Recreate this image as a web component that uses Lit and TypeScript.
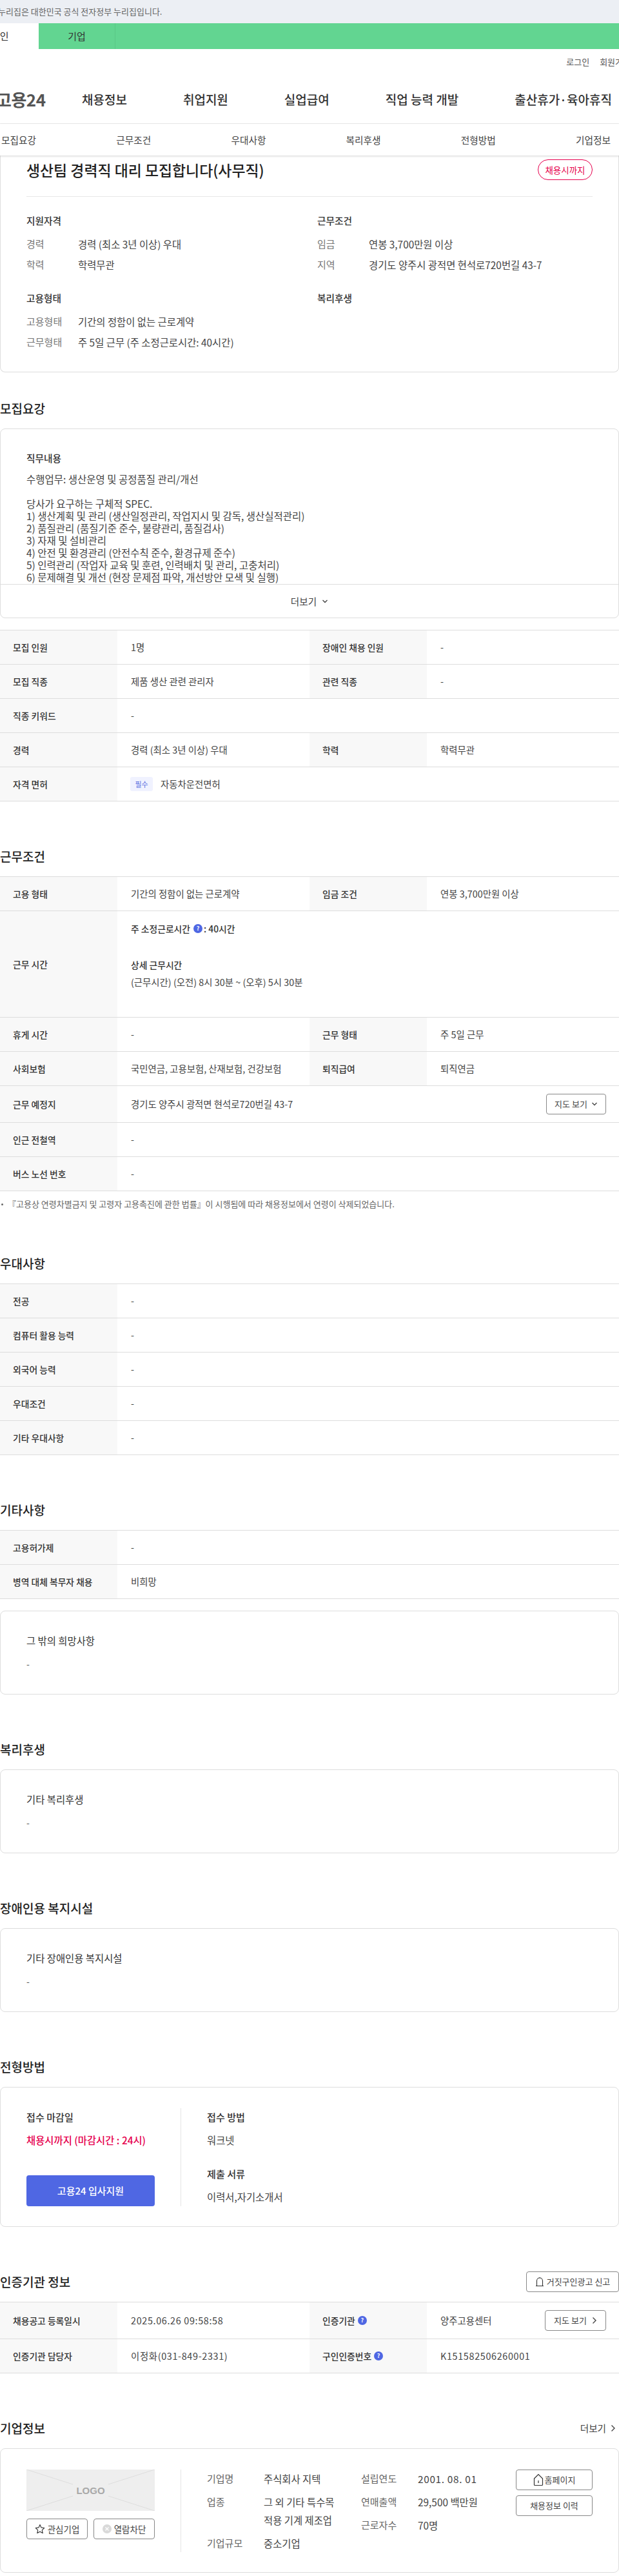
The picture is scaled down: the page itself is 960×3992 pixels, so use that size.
import { LitElement, html, css, svg } from "lit";
import { customElement } from "lit/decorators.js";

const chevDown = html`<svg class="ic" width="10" height="8" viewBox="0 0 10 8"><path d="M1.500 2l3.500 3.500L8.500 2" fill="none" stroke="currentColor" stroke-width="1.300"/></svg>`;
const chevRight = html`<svg class="ic" width="8" height="12" viewBox="0 0 8 12"><path d="M1.500 1.500L6 6l-4.500 4.500" fill="none" stroke="currentColor" stroke-width="1.400"/></svg>`;
const help = html`<span class="help">?</span>`;
const bell = html`<svg class="ic" width="14" height="16" viewBox="0 0 14 16"><path d="M1 14.500h12M2.500 14.500V6.500a4.500 4.500 0 0 1 9 0v8" fill="none" stroke="#333" stroke-width="1.100"/><path d="M7 2V1" stroke="#333"/></svg>`;
const house = html`<svg class="ic" width="16" height="20" viewBox="0 0 16 20"><path d="M1.500 8L8 1.500 14.500 8v9.500a1 1 0 0 1-1 1h-11a1 1 0 0 1-1-1z" fill="none" stroke="#333" stroke-width="1.200"/><path d="M8 11v4" stroke="#333" stroke-width="1.200"/></svg>`;
const star = html`<svg class="ic" width="16" height="16" viewBox="0 0 16 16"><path d="M8 1.500l2 4.400 4.700.6-3.400 3.300.9 4.800L8 12.200l-4.200 2.400.9-4.800L1.300 6.500 6 5.900z" fill="none" stroke="#333" stroke-width="1.100" stroke-linejoin="round"/></svg>`;
const block = html`<svg class="ic" width="14" height="14" viewBox="0 0 14 14"><circle cx="7" cy="7" r="7" fill="#d9d9d9"/><path d="M4.500 4.500l5 5M9.500 4.500l-5 5" stroke="#fff" stroke-width="1.200"/></svg>`;

type Cell = unknown;

@customElement("app-root")
export class AppRoot extends LitElement {
  static styles = css`
    :host { display: block; width: 960px; overflow: hidden; font-family: "Noto Sans CJK KR", "Noto Sans", sans-serif; color: #333; background: #fff; font-size: 14px; line-height: 24px; word-break: keep-all; }
    * { box-sizing: border-box; }
    .ic { flex: none; display: block; }
    .num { letter-spacing: .65px; }
    .gov { height: 36px; background: #eceff4; color: #666; font-size: 13px; display: flex; align-items: center; white-space: nowrap; }
    .gov span { margin-left: -3px; }
    .tabs { height: 40px; background: #62d591; display: flex; }
    .tab { display: flex; align-items: center; justify-content: center; font-size: 15px; height: 100%; }
    .tab.on { width: 60px; background: #fff; justify-content: flex-start; white-space: nowrap; }
    .tab.on span { margin-left: -14px; }
    .tab.off { width: 119px; border-right: 1px solid #5ac886; }
    .util { display: flex; justify-content: flex-end; gap: 16px; margin-right: -18px; padding-top: 8px; font-size: 13px; line-height: 24px; color: #555; height: 40px; }
    .nav { display: flex; height: 76px; align-items: center; border-bottom: 1px solid #eee; white-space: nowrap; }
    .logo { width: 133px; flex: none; margin-left: -6px; font-size: 26px; font-weight: 700; color: #555; letter-spacing: -.5px; }
    .nav a { font-size: 19px; font-weight: 500; color: #333; margin-right: 87px; }
    .snav { height: 49px; display: flex; padding-left: 2px; align-items: center; font-size: 14.700px; color: #444; box-shadow: 0 1px 3px rgba(0,0,0,.18); position: relative; }
    .snav a { width: 178.200px; flex: none; }
    .card { border: 1px solid #ddd; border-radius: 8px; }
    .summary { border-top: none; border-radius: 0 0 8px 8px; padding: 0 40px 34px; }
    .head { display: flex; justify-content: space-between; align-items: center; padding: 6px 0 25px; border-bottom: 1px solid #e8e8e8; }
    .head h1 { margin: 0; font-size: 22.900px; font-weight: 500; line-height: 31px; color: #222; }
    .pill { height: 32px; width: 85px; border: 1px solid #e6004d; border-radius: 16px; display: flex; align-items: center; justify-content: center; font-size: 13.500px; color: #e6004d; }
    .sgrid { display: grid; grid-template-columns: 451px 1fr; row-gap: 28px; padding-top: 25px; }
    .sgrid h3 { margin: 0; font-size: 14.700px; font-weight: 500; line-height: 24px; color: #333; }
    .bt { font-size: 15.100px; font-weight: 500; line-height: 24px; color: #333; }
    .kv { display: grid; grid-template-columns: 80px 1fr; row-gap: 8px; margin-top: 12px; color: #444; font-size: 15.400px; }
    .kv .k { color: #777; font-size: 15px; }
    .sec { margin-top: 71px; }
    .sec.first { margin-top: 42px; }
    .sec h2 { margin: 0 0 17px; font-size: 19px; font-weight: 500; line-height: 28px; color: #222; }
    .hrow { display: flex; justify-content: space-between; align-items: center; height: 28px; margin-bottom: 17px; }
    .hrow h2 { margin: 0; }
    .more { display: flex; align-items: center; gap: 7px; font-size: 14.600px; margin-right: 5px; color: #444; }
    .desc { height: 294px; display: flex; flex-direction: column; margin-bottom: 18px; }
    .descBody { height: 240px; overflow: hidden; padding: 33px 40px 0; }
    .descBody .bt { font-size: 14.700px; }
    .descBody p { margin: 11px 0 0; line-height: 19px; white-space: pre-line; color: #444; font-size: 15.500px; }
    .moreBar { flex: 1; border-top: 1px solid #ddd; display: flex; align-items: center; justify-content: center; gap: 8px; color: #444; font-size: 14.600px; }
    .tbl { border-top: 1px solid #ddd; }
    .row { display: grid; grid-template-columns: 182px 298px 182px 1fr; border-bottom: 1px solid #ddd; min-height: 53px; color: #444; font-size: 14.400px; }
    .k2 { background: #f8f8f8; padding-left: 20px; display: flex; align-items: center; gap: 4px; font-weight: 500; color: #333; font-size: 13.800px; }
    .v2 { padding-left: 21px; display: flex; align-items: center; }
    .v2.wide { grid-column: 2 / -1; }
    .v2.btn { justify-content: space-between; padding-right: 20px; padding-top: 12px; padding-bottom: 12px; }
    .badge { width: 35px; height: 22px; background: #f0f2ff; color: #5b6fe0; font-size: 11px; border-radius: 3px; display: flex; align-items: center; justify-content: center; margin: 0 12px 0 -1px; }
    .help { width: 14px; height: 14px; border-radius: 50%; background: #4f67e3; color: #fff; font-size: 9px; line-height: 14px; text-align: center; font-weight: 700; display: inline-block; flex: none; }
    .hours { display: block; padding-top: 15px; height: 164px; }
    .hours div { line-height: 24px; color: #333; }
    .hours .g { margin-top: 32px; font-weight: 500; font-size: 13.800px; }
    .hours .h { display: flex; align-items: center; gap: 2px; font-weight: 500; font-size: 13.800px; white-space: pre; }
    .hours .l { margin-top: 3px; color: #444; }
    .bbtn { height: 32px; border: 1px solid #888; border-radius: 4px; background: #fff; display: flex; align-items: center; justify-content: center; gap: 6px; color: #444; font-size: 13px; white-space: nowrap; }
    .map { width: 93px; }
    .map2 { width: 95px; gap: 8px; }
    .note { margin: 10px 0 -3px; font-size: 13px; line-height: 20px; color: #666; display: flex; white-space: nowrap; }
    .note i { width: 3px; height: 3px; border-radius: 50%; background: #666; margin: 9px 7px 0 2px; flex: none; }
    .after { margin-top: 18px; }
    .simple { padding: 33px 40px 34px; height: 130px; }
    .simple p { margin: 12px 0 0; color: #555; }
    .simple .bt { font-weight: 400; font-size: 15.400px; }
    .apply { display: flex; padding: 32px 40px 31px; }
    .aL { width: 199px; height: 152px; display: flex; flex-direction: column; padding-top: 1px; }
    .red { color: #e6004d; font-weight: 500; margin-top: 12px; font-size: 15.400px; white-space: nowrap; }
    .go { margin-top: auto; height: 48px; background: #4f67e3; color: #fff; border-radius: 4px; display: flex; align-items: center; justify-content: center; font-size: 15px; font-weight: 500; }
    .div { width: 1px; background: #e5e5e5; margin: 0 40px; flex: none; }
    .aR { padding-top: 1px; }
    .aR p { margin: 12px 0 28px; color: #444; font-size: 15.400px; }
    .aR p:last-child { margin-bottom: 0; }
    .report { width: 144px; gap: 4px; height: 32px; margin-right: 0; }
    .comp { display: flex; padding: 32px 40px 31px; }
    .cL { width: 199px; }
    .lg { display: block; width: 199px; height: 64px; }
    .cBtns { display: flex; justify-content: space-between; margin-top: 12px; }
    .cBtns .bbtn { width: 95px; gap: 4px; font-size: 13.500px; }
    .cGrid { width: 239px; display: grid; grid-template-columns: 88px 135px; row-gap: 8px; line-height: 28px; align-self: flex-start; color: #444; font-size: 15.400px; }
    .cGrid .k { color: #666; font-size: 15px; }
    .cBtnCol { width: 119px; display: flex; flex-direction: column; gap: 8px; margin-left: auto; }
    .cBtnCol .bbtn { gap: 2px; }
  `;

  private row(a: Cell, b: Cell, c?: Cell, d?: Cell) {
    return c === undefined
      ? html`<div class="row"><div class="k2">${a}</div><div class="v2 wide">${b}</div></div>`
      : html`<div class="row"><div class="k2">${a}</div><div class="v2">${b}</div><div class="k2">${c}</div><div class="v2">${d}</div></div>`;
  }

  private kv(k: string, v: unknown) {
    return html`<div class="k">${k}</div><div>${v}</div>`;
  }

  private box(title: string) {
    return html`<div class="card simple"><div class="bt">${title}</div><p>-</p></div>`;
  }

  render() {
    const lines = svg`<path d="M0 0L72 23M199 0L127 23M0 64L72 41M199 64L127 41" stroke="#ddd" stroke-width="1"/>`;
    return html`
      <div class="gov"><span>누리집은 대한민국 공식 전자정부 누리집입니다.</span></div>
      <div class="tabs">
        <div class="tab on"><span>개인</span></div>
        <div class="tab off">기업</div>
      </div>
      <div class="util"><span>로그인</span><span>회원가입</span></div>
      <div class="nav">
        <div class="logo">고용24</div>
        <a>채용정보</a><a>취업지원</a><a>실업급여</a><a>직업 능력 개발</a><a>출산휴가·육아휴직</a>
      </div>
      <div class="snav"><a>모집요강</a><a>근무조건</a><a>우대사항</a><a>복리후생</a><a>전형방법</a><a>기업정보</a></div>

      <div class="card summary">
        <div class="head"><h1>생산팀 경력직 대리 모집합니다(사무직)</h1><div class="pill">채용시까지</div></div>
        <div class="sgrid">
          <div><h3>지원자격</h3><div class="kv">${this.kv("경력", "경력 (최소 3년 이상) 우대")}${this.kv("학력", "학력무관")}</div></div>
          <div><h3>근무조건</h3><div class="kv">${this.kv("임금", "연봉 3,700만원 이상")}${this.kv("지역", "경기도 양주시 광적면 현석로720번길 43-7")}</div></div>
          <div><h3>고용형태</h3><div class="kv">${this.kv("고용형태", "기간의 정함이 없는 근로계약")}${this.kv("근무형태", "주 5일 근무 (주 소정근로시간: 40시간)")}</div></div>
          <div><h3>복리후생</h3></div>
        </div>
      </div>

      <section class="sec first">
        <h2>모집요강</h2>
        <div class="card desc">
          <div class="descBody">
            <div class="bt">직무내용</div>
            <p>수행업무: 생산운영 및 공정품질 관리/개선

당사가 요구하는 구체적 SPEC.
1) 생산계획 및 관리 (생산일정관리, 작업지시 및 감독, 생산실적관리)
2) 품질관리 (품질기준 준수, 불량관리, 품질검사)
3) 자재 및 설비관리
4) 안전 및 환경관리 (안전수칙 준수, 환경규제 준수)
5) 인력관리 (작업자 교육 및 훈련, 인력배치 및 관리, 고충처리)
6) 문제해결 및 개선 (현장 문제점 파악, 개선방안 모색 및 실행)</p>
          </div>
          <div class="moreBar">더보기 ${chevDown}</div>
        </div>
        <div class="tbl">
          ${this.row("모집 인원", "1명", "장애인 채용 인원", "-")}
          ${this.row("모집 직종", "제품 생산 관련 관리자", "관련 직종", "-")}
          ${this.row("직종 키워드", "-")}
          ${this.row("경력", "경력 (최소 3년 이상) 우대", "학력", "학력무관")}
          ${this.row("자격 면허", html`<span class="badge">필수</span>자동차운전면허`)}
        </div>
      </section>

      <section class="sec">
        <h2>근무조건</h2>
        <div class="tbl">
          ${this.row("고용 형태", "기간의 정함이 없는 근로계약", "임금 조건", "연봉 3,700만원 이상")}
          <div class="row">
            <div class="k2">근무 시간</div>
            <div class="v2 wide hours">
              <div class="h">주 소정근로시간 ${help}<span>: 40시간</span></div>
              <div class="g">상세 근무시간</div>
              <div class="l">(근무시간) (오전) 8시 30분 ~ (오후) 5시 30분</div>
            </div>
          </div>
          ${this.row("휴게 시간", "-", "근무 형태", "주 5일 근무")}
          ${this.row("사회보험", "국민연금, 고용보험, 산재보험, 건강보험", "퇴직급여", "퇴직연금")}
          <div class="row">
            <div class="k2">근무 예정지</div>
            <div class="v2 wide btn">경기도 양주시 광적면 현석로720번길 43-7<div class="bbtn map">지도 보기 ${chevDown}</div></div>
          </div>
          ${this.row("인근 전철역", "-")}
          ${this.row("버스 노선 번호", "-")}
        </div>
        <div class="note"><i></i>『고용상 연령차별금지 및 고령자 고용촉진에 관한 법률』이 시행됨에 따라 채용정보에서 연령이 삭제되었습니다.</div>
      </section>

      <section class="sec">
        <h2>우대사항</h2>
        <div class="tbl">
          ${this.row("전공", "-")}
          ${this.row("컴퓨터 활용 능력", "-")}
          ${this.row("외국어 능력", "-")}
          ${this.row("우대조건", "-")}
          ${this.row("기타 우대사항", "-")}
        </div>
      </section>

      <section class="sec">
        <h2>기타사항</h2>
        <div class="tbl">
          ${this.row("고용허가제", "-")}
          ${this.row("병역 대체 복무자 채용", "비희망")}
        </div>
        <div class="after">${this.box("그 밖의 희망사항")}</div>
      </section>

      <section class="sec"><h2>복리후생</h2>${this.box("기타 복리후생")}</section>
      <section class="sec"><h2>장애인용 복지시설</h2>${this.box("기타 장애인용 복지시설")}</section>

      <section class="sec">
        <h2>전형방법</h2>
        <div class="card apply">
          <div class="aL">
            <div class="bt">접수 마감일</div>
            <div class="red">채용시까지 (마감시간 : 24시)</div>
            <div class="go">고용24 입사지원</div>
          </div>
          <div class="div"></div>
          <div class="aR">
            <div class="bt">접수 방법</div><p>워크넷</p>
            <div class="bt">제출 서류</div><p>이력서,자기소개서</p>
          </div>
        </div>
      </section>

      <section class="sec">
        <div class="hrow"><h2>인증기관 정보</h2><div class="bbtn report">${bell} 거짓구인광고 신고</div></div>
        <div class="tbl">
          <div class="row">
            <div class="k2">채용공고 등록일시</div><div class="v2"><span class="num">2025.06.26 09:58:58</span></div>
            <div class="k2">인증기관 ${help}</div>
            <div class="v2 btn">양주고용센터<div class="bbtn map2">지도 보기 ${chevRight}</div></div>
          </div>
          ${this.row("인증기관 담당자", html`<span class="num">이정화(031-849-2331)</span>`, html`구인인증번호 ${help}`, html`<span class="num">K151582506260001</span>`)}
        </div>
      </section>

      <section class="sec">
        <div class="hrow"><h2>기업정보</h2><div class="more">더보기 ${chevRight}</div></div>
        <div class="card comp">
          <div class="cL">
            <svg class="lg" viewBox="0 0 199 64"><rect width="199" height="64" fill="#eee"/>${lines}<text x="99.500" y="37.500" text-anchor="middle" font-family="Liberation Sans, sans-serif" font-weight="700" font-size="15" fill="#a8a8a8">LOGO</text></svg>
            <div class="cBtns">
              <div class="bbtn">${star}관심기업</div>
              <div class="bbtn">${block}열람차단</div>
            </div>
          </div>
          <div class="div"></div>
          <div class="cGrid a">
            ${this.kv("기업명", "주식회사 지텍")}
            ${this.kv("업종", "그 외 기타 특수목 적용 기계 제조업")}
            ${this.kv("기업규모", "중소기업")}
          </div>
          <div class="cGrid b">
            ${this.kv("설립연도", html`<span class="num">2001. 08. 01</span>`)}
            ${this.kv("연매출액", "29,500 백만원")}
            ${this.kv("근로자수", "70명")}
          </div>
          <div class="cBtnCol">
            <div class="bbtn">${house}홈페이지</div>
            <div class="bbtn">채용정보 이력</div>
          </div>
        </div>
      </section>
    `;
  }
}
